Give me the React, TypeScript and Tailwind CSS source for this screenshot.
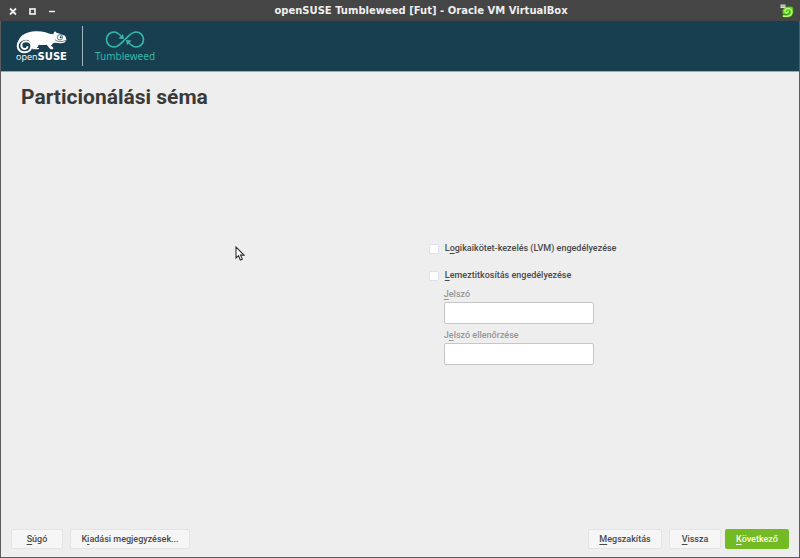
import { FormEvent, ReactNode, useState } from "react";
import clsx from "clsx";

function Mnemonic({ children }: { children: ReactNode }) {
  return <u className="underline decoration-1 underline-offset-2">{children}</u>;
}

function ActionButton({
  children,
  primary = false,
  className,
}: {
  children: ReactNode;
  primary?: boolean;
  className?: string;
}) {
  return (
    <button
      type={primary ? "submit" : "button"}
      className={clsx(
        "h-5 rounded-xs text-[9px] leading-none font-medium",
        primary
          ? "bg-[#73ba25] text-[#f4faec]"
          : "border border-[#e4e4e4] bg-[#f6f6f6] text-[#4a4a4a]",
        className,
      )}
    >
      {children}
    </button>
  );
}

function TitleBar() {
  return (
    <header className="flex h-[21px] items-center bg-[#454545] pr-1.5 pl-2 text-white">
      <div className="flex w-[54px] gap-2.5">
        <button type="button" aria-label="Bezárás">
          <svg viewBox="0 0 10 10" className="size-2.5" fill="none" stroke="#eee" strokeWidth="1.8">
            <path d="M2 2.5l6 6M8 2.5l-6 6" />
          </svg>
        </button>
        <button type="button" aria-label="Teljes méret">
          <svg viewBox="0 0 10 10" className="size-2.5" fill="none" stroke="#eee" strokeWidth="1.7">
            <rect x="2" y="3" width="5" height="5" />
          </svg>
        </button>
        <button type="button" aria-label="Kis méret">
          <svg viewBox="0 0 10 10" className="size-2.5" fill="none" stroke="#eee" strokeWidth="1.5">
            <path d="M1 5.5h6" />
          </svg>
        </button>
      </div>
      <span className="flex-1 text-center font-['DejaVu_Sans',sans-serif] text-[10px] font-bold text-[#eee]">
        openSUSE Tumbleweed [Fut] - Oracle VM VirtualBox
      </span>
      <svg viewBox="0 0 14 14" className="size-3.5" fill="none" aria-hidden="true">
        <path d="M3 5C4 2.500 10 1.500 13 3c.8 3 .8 7-1.500 9.500-3 1.500-7 1.500-10-.5 1 0 1.500-.5 2-1C1.800 9 1.800 7 3 5z" fill="#5fd21c" stroke="#2c5c1a" strokeWidth=".6" />
        <path d="M3 12c3 .8 7 .3 8.500-2.200C12.800 7 11 4.500 8.200 4.500c-2.500 0-4 2-3 3.700.9 1.400 3.300.9 3-1" stroke="#c6f78a" strokeWidth="1.300" />
        <path d="M4 10.500c3 .8 6-.9 5.800-3.300" stroke="#267f16" strokeWidth=".8" />
        <rect x=".5" y=".5" width="5" height="3.500" fill="#ddd" />
        <path d="M1.500 2h1M3.500 2h1" stroke="#555" />
      </svg>
    </header>
  );
}

function Chameleon() {
  return (
    <svg viewBox="48 90 159 72" className="h-6 w-[53px]" aria-hidden="true">
      <path
        d="M55 132C58 115 69 103 85 98c18-5 38-6 54-1 9 3 17 6 24 6 1-4 2-7 6-9 1 3 4 5 9 6l20 7c2 4 4 8 4 13-1 6-8 10-16 10-7 0-14-2-20-2-5 2-8 6-10 9 3 3 7 4 7 8 0 3-4 3-8 3-6-6-10-12-12-14-8 1-16 1-23 0-3 4-5 8-7 10l7 0c0 3-1 4-4 4h-15c-3-4-3-9-4-13-4-4-9-6-14-4z"
        fill="#fff"
      />
      <circle cx="77" cy="138" r="21" fill="#173f4f" />
      <path
        d="M95 121C82 111 57 119 56 138c0 12 10 19 21 19 12 0 20-8 20-18 0-9-7-15-16-15-8 0-14 6-14 13 0 6 5 10 10 10 6 0 9-4 8-8"
        fill="none"
        stroke="#fff"
        strokeWidth="6"
      />
      <circle cx="183" cy="112" r="8" fill="#fff" stroke="#173f4f" strokeWidth="2" />
      <circle cx="185" cy="112" r="3" fill="#173f4f" />
      <path d="M168 119c8 8 24 6 33 2" fill="none" stroke="#173f4f" strokeWidth="2" />
    </svg>
  );
}

function Brand() {
  return (
    <div className="flex h-[50px] items-center bg-[#173f4f] pl-3.5">
      <div className="flex flex-col items-center">
        <Chameleon />
        <span className="-mt-0.5 flex items-baseline leading-none text-white">
          <span className="font-['Open_Sans',sans-serif] text-[9px]">open</span>
          <span className="font-['DejaVu_Sans',sans-serif] text-[10px] font-bold">SUSE</span>
        </span>
      </div>
      <div className="ml-3.5 h-10 w-px bg-[#a4b5bc]" />
      <div className="ml-3 flex flex-col items-center text-[#35b9ab]">
        <svg viewBox="0 0 40 18" className="h-[18px] w-10" fill="none" stroke="currentColor" strokeWidth="1.600" aria-hidden="true">
          <path d="M16 6C13 3 11 2 9 2 5 2 1.500 5 1.500 9.500S5 17 9 17c4.500 0 6-3 11-7.500S26.500 2 31 2c4 0 7.500 3 7.500 7.500S35 17 31 17c-2 0-4-1-7-4" />
          <path d="M19 9l-5.500-.5 4.500-4.500zM21 10l5.500.5-4.500 4.500z" fill="currentColor" stroke="none" />
        </svg>
        <span className="mt-0.5 font-['Noto_Sans',sans-serif] text-[10px] leading-3">Tumbleweed</span>
      </div>
    </div>
  );
}

function CheckOption({
  checked,
  onChange,
  children,
}: {
  checked: boolean;
  onChange: (checked: boolean) => void;
  children: ReactNode;
}) {
  return (
    <label className="flex h-3.5 items-center gap-1.5 text-[9px] font-medium text-[#4a4a4a]">
      <input
        type="checkbox"
        checked={checked}
        onChange={(event) => onChange(event.target.checked)}
        className="size-2.5 appearance-none rounded-xs border border-[#dde2ee] bg-white checked:bg-[#73ba25]"
      />
      <span>{children}</span>
    </label>
  );
}

function PasswordField({ id, children }: { id: string; children: ReactNode }) {
  return (
    <div className="ml-[15px] flex w-[150px] flex-col pt-[3px]">
      <label htmlFor={id} className="text-[9px] leading-4 font-medium text-[#979797]">
        {children}
      </label>
      <input
        id={id}
        type="password"
        className="h-[22px] w-full rounded-xs border border-[#c6c6c6] bg-white px-1.5 text-[9px] outline-none"
      />
    </div>
  );
}

export default function App() {
  const [lvm, setLvm] = useState(false);
  const [encrypt, setEncrypt] = useState(false);

  function handleSubmit(event: FormEvent<HTMLFormElement>) {
    event.preventDefault();
  }

  return (
    <div className="relative flex min-h-screen flex-col bg-[#eee] font-[Roboto,sans-serif] text-[#3a3a3a]">
      <TitleBar />
      <div className="flex flex-1 flex-col border-x border-b border-[#5c5c5c]">
        <Brand />
        <form
          onSubmit={handleSubmit}
          className="flex flex-1 flex-col border-t border-[#a0a8ac] px-2.5 pb-2"
        >
          <h1 className="pt-3 pl-2.5 text-[21px] leading-[26px] font-bold">Particionálási séma</h1>
          <div className="grid flex-1 grid-cols-[15fr_13fr] items-center">
            <div className="col-start-2 pb-8 pl-px">
              <div className="flex flex-col gap-[13px]">
                <CheckOption checked={lvm} onChange={setLvm}>
                  L<Mnemonic>o</Mnemonic>gikaikötet-kezelés (LVM) engedélyezése
                </CheckOption>
                <CheckOption checked={encrypt} onChange={setEncrypt}>
                  <Mnemonic>L</Mnemonic>emeztitkosítás engedélyezése
                </CheckOption>
              </div>
              <div className="flex flex-col">
                <PasswordField id="password">
                  <Mnemonic>J</Mnemonic>elszó
                </PasswordField>
                <PasswordField id="password-check">
                  J<Mnemonic>e</Mnemonic>lszó ellenőrzése
                </PasswordField>
              </div>
            </div>
          </div>
          <footer className="flex items-center">
            <ActionButton className="w-[52px]">
              <Mnemonic>S</Mnemonic>úgó
            </ActionButton>
            <ActionButton className="ml-[7px] w-[120px]">
              K<Mnemonic>i</Mnemonic>adási megjegyzések...
            </ActionButton>
            <ActionButton className="ml-auto w-[74px]">
              <Mnemonic>M</Mnemonic>egszakítás
            </ActionButton>
            <ActionButton className="ml-[7px] w-[52px]">
              <Mnemonic>V</Mnemonic>issza
            </ActionButton>
            <ActionButton primary className="ml-1 w-16">
              <Mnemonic>K</Mnemonic>övetkező
            </ActionButton>
          </footer>
        </form>
      </div>
      <svg viewBox="0 0 10 15" className="pointer-events-none absolute top-[246px] left-[235px] h-[15px] w-2.5" aria-hidden="true">
        <path d="M1 1v11l2.500-2.300L5.300 14l2-.9-1.800-4H9z" fill="#fff" stroke="#333" strokeWidth="1.100" />
      </svg>
    </div>
  );
}
